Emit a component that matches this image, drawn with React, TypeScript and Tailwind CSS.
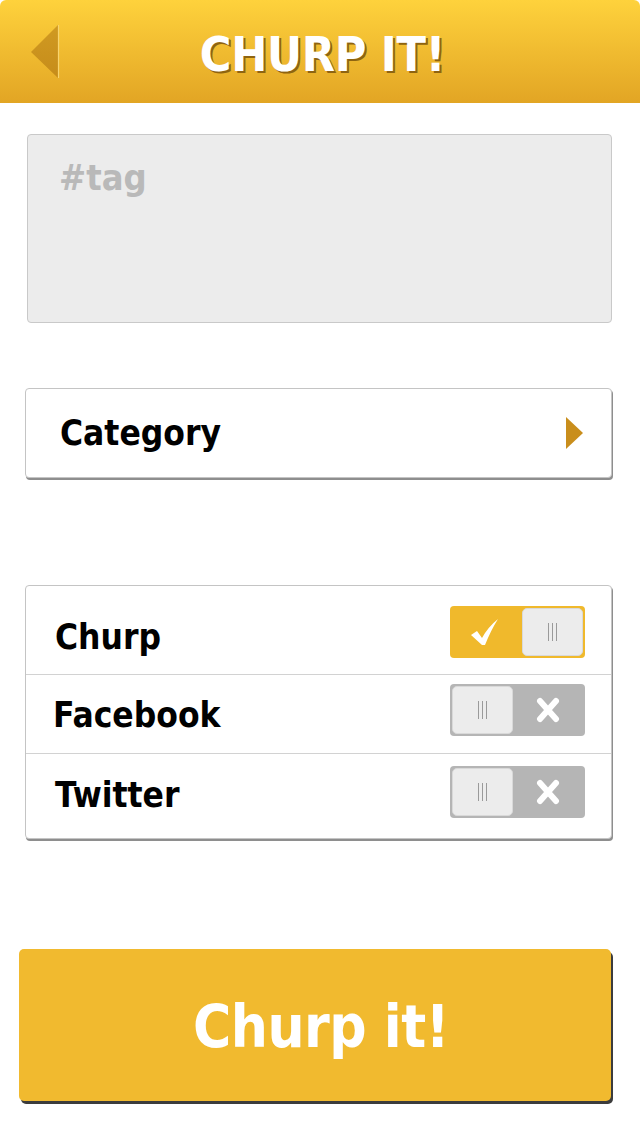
import React, { useState } from 'react';

const font = "font-['DejaVu_Sans_Condensed','DejaVu_Sans',sans-serif] font-stretch-condensed";

const Toggle: React.FC<{ on: boolean; onClick: () => void }> = ({ on, onClick }) => {
  const grip = (
    <div className="flex gap-[3px]">
      <span className="w-px h-[18px] bg-[#9a9a9a]"></span>
      <span className="w-px h-[18px] bg-[#9a9a9a]"></span>
      <span className="w-px h-[18px] bg-[#9a9a9a]"></span>
    </div>
  );
  const knob = (
    <div className="w-[61px] h-full rounded-[5px] bg-[#ececec] border border-[#d9d9d9] flex items-center justify-center">{grip}</div>
  );
  return (
    <button
      onClick={onClick}
      className={`w-[135px] h-[52px] rounded-[4px] p-[2px] flex ${on ? 'bg-[#f0b92c]' : 'bg-[#b5b5b5]'}`}
    >
      {on ? (
        <>
          <div className="flex-1 flex items-center justify-center pr-[4px]">
            <svg width="28" height="28" viewBox="0 0 28 28">
              <path d="M0 17 L6 13 L11 20 Q17 9 27 1 Q20 12 14 27 L11 27 Z" fill="#fff" />
            </svg>
          </div>
          {knob}
        </>
      ) : (
        <>
          {knob}
          <div className="flex-1 flex items-center justify-center">
            <svg width="24" height="26" viewBox="0 0 24 26">
              <path d="M4 4 L20 22 M20 4 L4 22" stroke="#fff" strokeWidth="6" strokeLinecap="round" />
            </svg>
          </div>
        </>
      )}
    </button>
  );
};

export default function App() {
  const [toggles, setToggles] = useState({ Churp: true, Facebook: false, Twitter: false });
  const rows: { name: keyof typeof toggles; h: string; label: string; tog: string }[] = [
    { name: 'Churp', h: 'h-[88px]', label: 'mt-[31px] ml-[29px]', tog: 'mt-[20px]' },
    { name: 'Facebook', h: 'h-[79px]', label: 'mt-[20px] ml-[27px]', tog: 'mt-[9px]' },
    { name: 'Twitter', h: 'h-[85px]', label: 'mt-[21px] ml-[29px]', tog: 'mt-[12px]' },
  ];

  return (
    <div className={`w-[640px] h-[1136px] bg-white flex flex-col ${font}`}>
      {/* header */}
      <div className="h-[103px] rounded-t-[6px] bg-gradient-to-b from-[#fed23c] to-[#e2a524] flex items-center relative">
        <div className="absolute left-[31px] top-[25px]">
          <svg width="29" height="54" viewBox="0 0 29 54">
            <defs>
              <linearGradient id="tri" x1="0" y1="0" x2="0" y2="1">
                <stop offset="0" stopColor="#d09a22" />
                <stop offset="1" stopColor="#c68c1a" />
              </linearGradient>
            </defs>
            <path d="M27 0 L0 27 L27 53 Z" fill="url(#tri)" />
            <path d="M27.5 0 L27.5 53" stroke="#f8d46e" strokeWidth="1.2" />
          </svg>
        </div>
        <h1 className="w-full text-center text-white font-bold text-[48px] leading-none tracking-[-0.3px] pl-[5px] pt-[5px] [text-shadow:2px_2px_0_#8f6410]">CHURP IT!</h1>
      </div>

      {/* tag textarea */}
      <div className="mx-[27px] mt-[31px] h-[189px] w-[585px] rounded-[4px] bg-[#ececec] border border-[#c9c9c9] px-[31px] pt-[25px]">
        <span className="text-[#b9b9b9] font-bold text-[36px] leading-none">#tag</span>
      </div>

      {/* category */}
      <div className="ml-[25px] mt-[65px] w-[587px] h-[90px] rounded-[4px] bg-white border border-[#c4c4c4] shadow-[1px_2px_0_#8e8e8e] flex items-center justify-between pl-[34px] pr-[28px]">
        <span className="text-black font-bold text-[35px] leading-none">Category</span>
        <svg width="17" height="32" viewBox="0 0 17 32">
          <path d="M0 0 L17 16 L0 32 Z" fill="#c98e1c" />
        </svg>
      </div>

      {/* share toggles */}
      <div className="ml-[25px] mt-[107px] w-[587px] rounded-[4px] bg-white border border-[#c4c4c4] shadow-[1px_2px_0_#8e8e8e] flex flex-col">
        {rows.map((r, i) => (
          <div
            key={r.name}
            className={`${r.h} flex items-start justify-between pr-[26px] ${i > 0 ? 'border-t border-[#d2d2d2]' : ''}`}
          >
            <span className={`${r.label} text-black font-bold text-[35px] leading-[40px]`}>{r.name}</span>
            <div className={r.tog}>
              <Toggle on={toggles[r.name]} onClick={() => setToggles({ ...toggles, [r.name]: !toggles[r.name] })} />
            </div>
          </div>
        ))}
      </div>

      {/* submit */}
      <button className="ml-[19px] mt-[110px] w-[592px] h-[152px] rounded-[5px] bg-[#f1ba2f] shadow-[2px_3px_0_#3c3c3c] text-white font-bold text-[58px] leading-none tracking-[-0.5px] pl-[12px] pt-[4px]">
        Churp it!
      </button>
    </div>
  );
}
